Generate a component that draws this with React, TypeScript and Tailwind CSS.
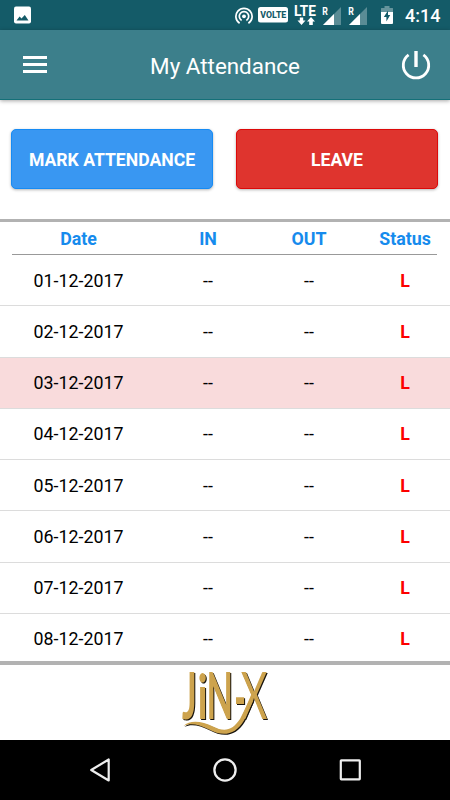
import React, { useState } from 'react';

interface AttendanceRow {
  date: string;
  in: string;
  out: string;
  status: string;
}

const ROWS: AttendanceRow[] = [
  { date: '01-12-2017', in: '--', out: '--', status: 'L' },
  { date: '02-12-2017', in: '--', out: '--', status: 'L' },
  { date: '03-12-2017', in: '--', out: '--', status: 'L' },
  { date: '04-12-2017', in: '--', out: '--', status: 'L' },
  { date: '05-12-2017', in: '--', out: '--', status: 'L' },
  { date: '06-12-2017', in: '--', out: '--', status: 'L' },
  { date: '07-12-2017', in: '--', out: '--', status: 'L' },
  { date: '08-12-2017', in: '--', out: '--', status: 'L' },
];

function SignalIcon() {
  return (
    <svg width="20" height="20" viewBox="0 0 20 20" className="shrink-0 overflow-visible">
      <path d="M19 2V20H1Z" fill="#fff" fillOpacity="0.3" />
      <path d="M12 9V20H1Z" fill="#fff" />
      <text x="0.3" y="9.5" fontSize="10" fontWeight="700" fill="#fff" textLength="5.6" lengthAdjust="spacingAndGlyphs">R</text>
    </svg>
  );
}

function StatusBar() {
  return (
    <div className="flex h-[30px] shrink-0 items-center bg-[#145b68] pl-[14px] pr-[9px] text-white">
      <svg width="17" height="18" viewBox="0 0 17 18" className="shrink-0">
        <rect y="0.5" width="17" height="17" rx="2" fill="#fff" />
        <path d="M2.5 14.5L5.6 10.6L7.5 12.6L10.8 9L14.5 14.5Z" fill="#145b68" />
      </svg>

      <div className="ml-auto flex items-center">
        <svg width="18" height="18" viewBox="0 0 18 18" className="mt-0.5 shrink-0" fill="none" stroke="#fff" strokeWidth="1.7">
          <path d="M4.6 16.2A8.1 8.1 0 1 1 13.4 16.2" />
          <path d="M6.6 13.4A4.7 4.7 0 1 1 11.4 13.4" />
          <circle cx="9" cy="9.3" r="1.9" fill="#fff" stroke="none" />
        </svg>
        <svg width="30" height="16" viewBox="0 0 30 16" className="ml-[5px] shrink-0">
          <rect width="30" height="15.5" rx="2.5" fill="#fff" />
          <text x="2.3" y="11.2" fontSize="9.5" fontWeight="800" fill="#145b68" textLength="26" lengthAdjust="spacingAndGlyphs">VOLTE</text>
        </svg>
        <svg width="22" height="20" viewBox="0 0 22 20" className="ml-[6px] shrink-0 overflow-visible">
          <text x="0" y="11.2" fontSize="15" fontWeight="700" fill="#fff" textLength="22" lengthAdjust="spacingAndGlyphs">LTE</text>
          <path d="M5.8 12.5H9.2V15.5H11.5L7.5 20L3.5 15.5H5.8Z" fill="#fff" />
          <path d="M15.2 20H18.8V16.5H21L17 12L13 16.5H15.2Z" fill="#fff" />
        </svg>
        <div className="ml-[6px] flex gap-[6px]">
          <SignalIcon />
          <SignalIcon />
        </div>
        <svg width="12" height="18" viewBox="0 0 12 18" className="ml-[13px] shrink-0">
          <path d="M0.5 2H3.5V0H8.5V2H11.5Q12 2 12 2.5V6H0V2.5Q0 2 0.5 2Z" fill="#fff" fillOpacity="0.35" />
          <path d="M0 6H12V17Q12 18 11 18H1Q0 18 0 17Z" fill="#fff" />
          <path d="M7 4.5L2.8 11H5.4V15.5L9.2 9H7Z" fill="#145b68" />
        </svg>
        <span className="ml-[12px] w-[36px] whitespace-nowrap pt-[2px] text-[18px] font-medium leading-6">4:14</span>
      </div>
    </div>
  );
}

function Logo() {
  return (
    <svg
      width="90"
      height="70"
      viewBox="0 0 90 70"
      role="img"
      aria-label="JiN-X"
      fill="#cda34d"
      className="overflow-visible drop-shadow-[1px_1px_0_#17130d]"
    >
      <g fontFamily="Lato, sans-serif" fontWeight="700" fontSize="65">
        <text x="2" y="50" textLength="14.8" lengthAdjust="spacingAndGlyphs">J</text>
        <text x="17.4" y="50" fontSize="61" textLength="10.2" lengthAdjust="spacingAndGlyphs">i</text>
        <text x="26.5" y="50" textLength="26.5" lengthAdjust="spacingAndGlyphs">N</text>
        <text x="54.2" y="51" textLength="11.6" lengthAdjust="spacingAndGlyphs">-</text>
        <text x="60.5" y="50" fontWeight="400" textLength="27" lengthAdjust="spacingAndGlyphs">X</text>
      </g>
      <path d="M3.5 57C10 50.5 22 52 33 57.5C44 63 52 62 60 50L70 30L73 32L64 51.5C55 67 42 67.5 29 60.5C18 55 10 54 3.5 57Z" />
    </svg>
  );
}

export default function App() {
  const [selected, setSelected] = useState('03-12-2017');

  return (
    <div className="flex h-[800px] w-[450px] flex-col overflow-hidden bg-white font-[Roboto,'Liberation_Sans',sans-serif] text-black">
      <StatusBar />

      <header className="relative flex h-[70px] shrink-0 items-center justify-between border-b border-[#147078] bg-[#3c7f8b] pl-[23px] pr-[19px] shadow-[0_1px_4px_rgba(0,0,0,0.35)]">
        <button aria-label="Menu" className="flex w-6 flex-col gap-1">
          <span className="h-[3px] bg-white" />
          <span className="h-[3px] bg-white" />
          <span className="h-[3px] bg-white" />
        </button>
        <h1 className="pl-[2px] pt-[3px] text-[22.4px] leading-none text-white">My Attendance</h1>
        <button aria-label="Log out">
          <svg width="30" height="30" viewBox="0 0 30 30" fill="none" stroke="#fff" strokeWidth="2.8">
            <path d="M15 1V17" strokeWidth="3.4" />
            <path d="M7.6 4.9A12.7 12.7 0 1 0 22.4 4.9" />
          </svg>
        </button>
      </header>

      <div className="flex h-[119px] shrink-0 gap-[23px] pl-[11px] pr-3 pt-[29px]">
        <button className="h-[60px] flex-1 rounded-[5px] border border-[#168bf4] bg-[#3997f2] pt-0.5 text-[17.6px] font-bold text-white shadow-[0_1px_3px_rgba(0,0,0,0.3)]">
          MARK ATTENDANCE
        </button>
        <button className="h-[60px] flex-1 rounded-[5px] border border-[#dc0909] bg-[#df342e] pt-0.5 text-[17.6px] font-bold text-white shadow-[0_1px_3px_rgba(0,0,0,0.3)]">
          LEAVE
        </button>
      </div>

      <section className="flex h-[446px] shrink-0 flex-col overflow-hidden border-b-4 border-t-[3px] border-[#b2b2b2]">
        <div className="grid h-8 shrink-0 grid-cols-[157px_102px_100px_91px] items-center pt-[3px] text-center text-[17.8px] font-bold text-[#168bed]">
          <span>Date</span>
          <span>IN</span>
          <span>OUT</span>
          <span className="pl-px">Status</span>
        </div>
        <div className="ml-3 mr-[13px] h-px shrink-0 bg-[#999]" />
        {ROWS.map((row) => (
          <div
            key={row.date}
            onClick={() => setSelected(row.date)}
            className={`grid h-[51.25px] shrink-0 grid-cols-[157px_102px_100px_91px] items-center border-b border-[#dcdcdc] pt-[1.5px] text-center text-[17.8px] ${
              row.date === selected ? 'bg-[#f9dbdc]' : 'bg-white'
            }`}
          >
            <span>{row.date}</span>
            <span>{row.in}</span>
            <span>{row.out}</span>
            <span className="pl-px font-bold text-[#fd0000]">{row.status}</span>
          </div>
        ))}
      </section>

      <footer className="flex h-[75px] shrink-0 justify-center pt-1">
        <Logo />
      </footer>

      <nav className="flex h-[60px] shrink-0 items-center justify-between bg-black pl-[89px] pr-[88px]">
        <svg width="23" height="26" viewBox="0 0 23 26" fill="none" stroke="#eee" strokeWidth="2.2" strokeLinejoin="round">
          <path d="M19.7 2.5V23.5L2.2 13Z" />
        </svg>
        <svg width="24" height="24" viewBox="0 0 24 24" fill="none" stroke="#eee" strokeWidth="2.3">
          <circle cx="12" cy="12" r="10.6" />
        </svg>
        <svg width="24" height="24" viewBox="0 0 24 24" fill="none" stroke="#eee" strokeWidth="2.2" strokeLinejoin="round">
          <rect x="2.8" y="2.3" width="19" height="19" rx="0.5" />
        </svg>
      </nav>
    </div>
  );
}
